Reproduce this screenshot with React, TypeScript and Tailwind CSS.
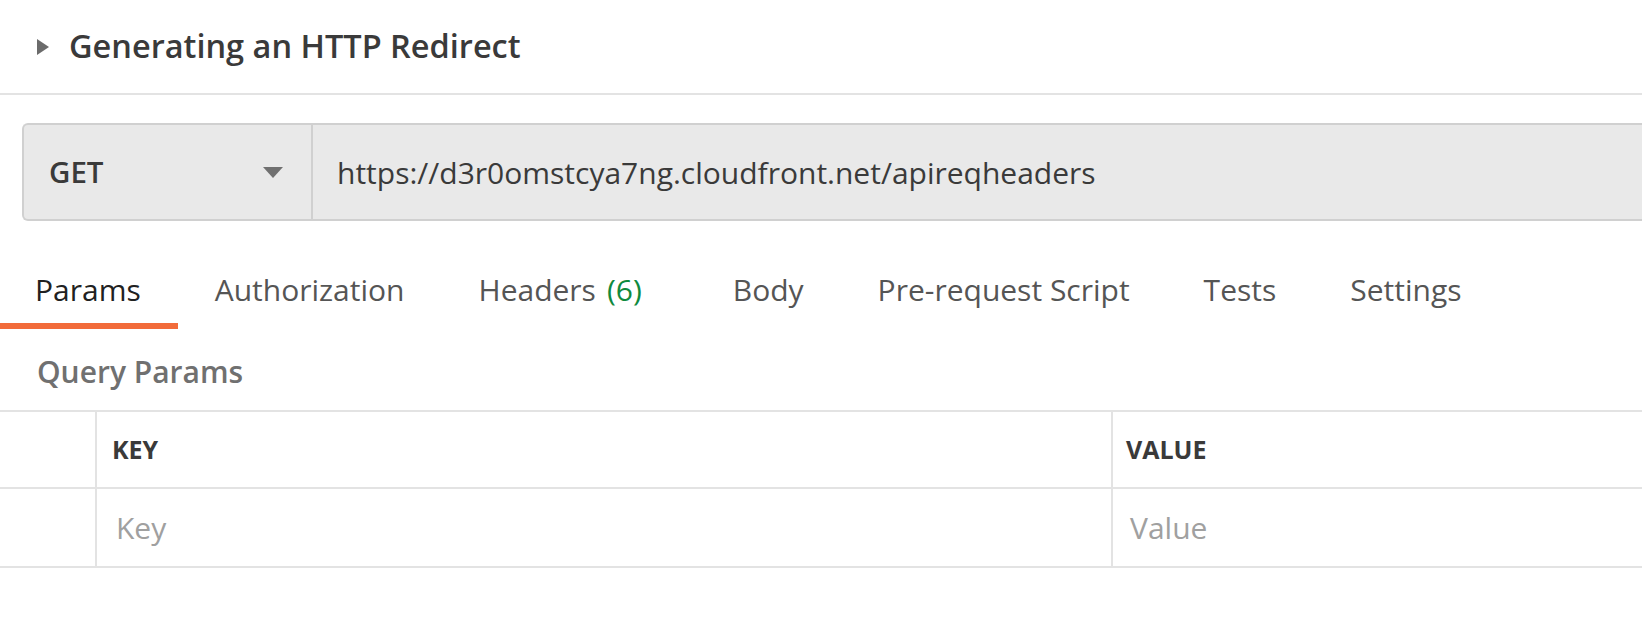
const tabs = [
  { label: 'Params', active: true },
  { label: 'Authorization' },
  { label: 'Headers', count: 6 },
  { label: 'Body' },
  { label: 'Pre-request Script' },
  { label: 'Tests' },
  { label: 'Settings' },
]

const App = (): React.ReactElement => {
  return (
    <div className="w-[1642px] h-[632px] overflow-hidden bg-white font-['Open_Sans',sans-serif] text-[#333]">
      {/* title */}
      <div className="h-[95px] flex items-center border-b-2 border-[#e3e3e3] pl-[37px]">
        <svg width="12" height="16" viewBox="0 0 12 16" className="mr-[20px]">
          <path d="M0 0 L12 8 L0 16 Z" fill="#6b6b6b" />
        </svg>
        <h1 className="text-[32.5px] font-semibold text-[#3a3a3a]">Generating an HTTP Redirect</h1>
      </div>

      {/* url bar */}
      <div className="pl-[22px] pt-[28px]">
        <div className="flex h-[98px] bg-[#e9e9e9] border-2 border-r-0 border-[#d0d0d0] rounded-l-[6px]">
          <div className="w-[289px] flex items-center justify-between pl-[25px] pr-[28px] border-r-2 border-[#d0d0d0]">
            <span className="text-[29.5px] font-semibold text-[#3a3a3a]">GET</span>
            <svg width="20" height="11" viewBox="0 0 20 11">
              <path d="M0 0 L20 0 L10 11 Z" fill="#707070" />
            </svg>
          </div>
          <div className="flex items-center pl-[24px] text-[30px] text-[#3a3a3a]">
            https://d3r0omstcya7ng.cloudfront.net/apireqheaders
          </div>
        </div>
      </div>

      {/* tabs */}
      <div className="flex mt-[35px] h-[73px]">
        {tabs.map((t, i) => (
          <div
            key={i}
            className={`flex items-center text-[30px] ${t.active ? 'pl-[35px] pr-[37px] border-b-[6px] border-[#f26b3a] text-[#212121]' : 'px-[37px] text-[#555] border-b-[6px] border-transparent'}`}
          >
            {t.label}
            {t.count !== undefined && <span className="ml-[11px] mr-[17px] text-[#0f8a3e]">({t.count})</span>}
          </div>
        ))}
      </div>

      <div className="pl-[37px] pt-[23px] pb-[18px] text-[30px] leading-[40px] font-semibold text-[#707070]">Query Params</div>

      {/* table */}
      <div className="border-t-2 border-b-2 border-[#e3e3e3]">
        <div className="flex h-[77px] border-b-2 border-[#e3e3e3]">
          <div className="w-[97px] border-r-2 border-[#e3e3e3]" />
          <div className="w-[1016px] flex items-center pl-[15px] border-r-2 border-[#e3e3e3] text-[25px] font-bold text-[#3a3a3a]">KEY</div>
          <div className="flex-1 flex items-center pl-[13px] text-[25px] font-bold text-[#3a3a3a]">VALUE</div>
        </div>
        <div className="flex h-[77px]">
          <div className="w-[97px] border-r-2 border-[#e3e3e3]" />
          <div className="w-[1016px] flex items-center pl-[19px] border-r-2 border-[#e3e3e3] text-[30px] text-[#a0a0a0]">Key</div>
          <div className="flex-1 flex items-center pl-[17px] text-[30px] text-[#a0a0a0]">Value</div>
        </div>
      </div>
    </div>
  )
}

export default App
